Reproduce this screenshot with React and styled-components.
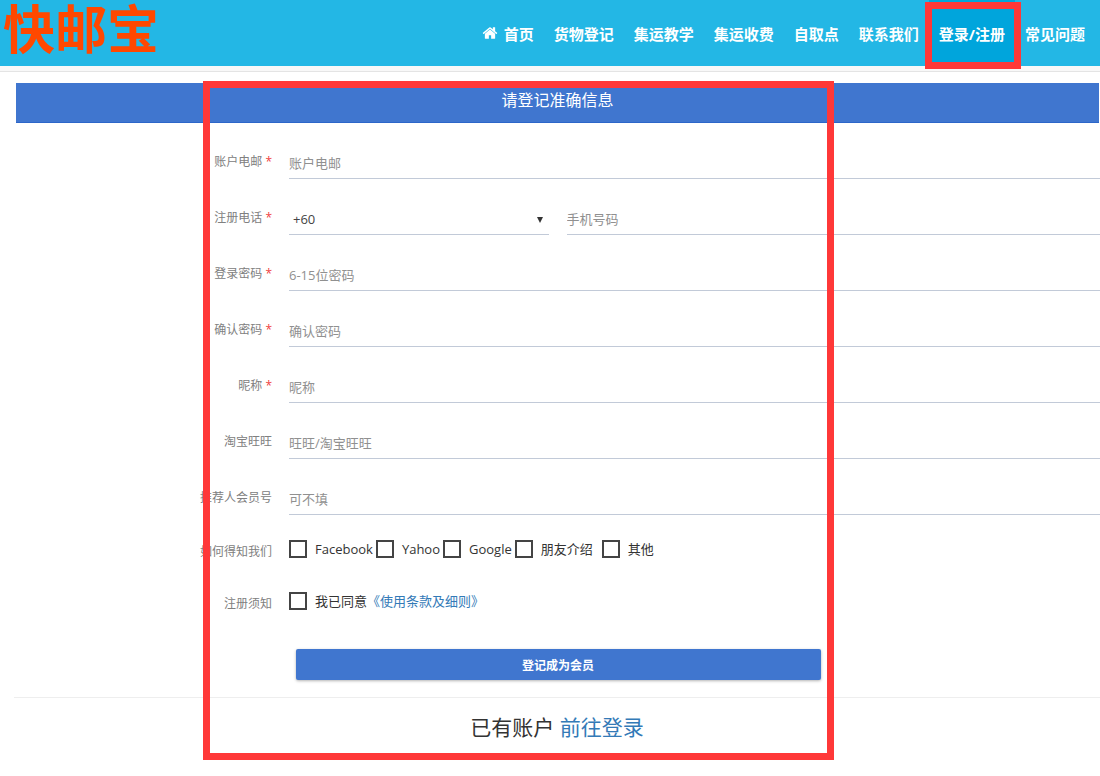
import styled, { createGlobalStyle } from 'styled-components';

const menu = [
  { label: '首页', icon: true },
  { label: '货物登记' },
  { label: '集运教学' },
  { label: '集运收费' },
  { label: '自取点' },
  { label: '联系我们' },
  { label: '登录/注册', active: true },
  { label: '常见问题' },
];

const fields = [
  { id: 'password', label: '登录密码', placeholder: '6-15位密码', type: 'password', required: true },
  { id: 'confirm', label: '确认密码', placeholder: '确认密码', type: 'password', required: true },
  { id: 'nickname', label: '昵称', placeholder: '昵称', type: 'text', required: true },
  { id: 'wangwang', label: '淘宝旺旺', placeholder: '旺旺/淘宝旺旺', type: 'text' },
  { id: 'referrer', label: '推荐人会员号', placeholder: '可不填', type: 'text' },
];

const sources = [
  { id: 'facebook', label: 'Facebook' },
  { id: 'yahoo', label: 'Yahoo' },
  { id: 'google', label: 'Google' },
  { id: 'friend', label: '朋友介绍', spaced: true },
  { id: 'other', label: '其他' },
];

function Field({ id, label, placeholder, type, required }) {
  return (
    <Row>
      <Label htmlFor={id}>
        {label}
        {required && <Required> *</Required>}
      </Label>
      <Input id={id} type={type} placeholder={placeholder} />
    </Row>
  );
}

function HomeIcon() {
  return (
    <svg width="16" height="16" viewBox="0 0 1792 1792" fill="currentColor" aria-hidden="true">
      <path d="M1472 992v480q0 26-19 45t-45 19h-384v-384h-256v384h-384q-26 0-45-19t-19-45v-480q0-1 .5-3t.5-3l575-474 575 474q1 2 1 6zm223-69l-62 74q-8 9-21 11h-3q-13 0-21-7l-692-577-692 577q-12 8-24 7-13-2-21-11l-62-74q-8-10-7-23.5t11-21.5l719-599q32-26 76-26t76 26l244 204v-195q0-14 9-23t23-9h192q14 0 23 9t9 23v408l219 182q10 8 11 21.5t-7 23.5z" />
    </svg>
  );
}

export default function App() {
  return (
    <>
      <GlobalStyle />
      <Header>
        <Logo href="#">快邮宝</Logo>
        <Nav>
          {menu.map((item) => (
            <NavLink key={item.label} href="#" $active={item.active}>
              {item.icon && <HomeIcon />}
              {item.label}
            </NavLink>
          ))}
        </Nav>
      </Header>
      <Strip />

      <Main>
        <Form onSubmit={(e) => e.preventDefault()}>
          <Title>请登记准确信息</Title>

          <Field id="email" label="账户电邮" placeholder="账户电邮" type="email" required />

          <Row>
            <Label htmlFor="phone">
              注册电话<Required> *</Required>
            </Label>
            <PhoneGroup>
              <SelectWrap>
                <Select aria-label="+60" defaultValue="+60">
                  <option value="+60">+60</option>
                </Select>
                <Arrow viewBox="0 0 6 6" aria-hidden="true">
                  <path d="M0 0h6L3 6z" />
                </Arrow>
              </SelectWrap>
              <Input id="phone" type="tel" placeholder="手机号码" />
            </PhoneGroup>
          </Row>

          {fields.map((field) => (
            <Field key={field.id} {...field} />
          ))}

          <Checks>
            <CheckRow role="group" aria-labelledby="source-label">
              <CheckTitle id="source-label">如何得知我们</CheckTitle>
              <Options>
                {sources.map((source) => (
                  <Option key={source.id} $spaced={source.spaced}>
                    <Checkbox type="checkbox" name={source.id} />
                    {source.label}
                  </Option>
                ))}
              </Options>
            </CheckRow>
            <CheckRow role="group" aria-labelledby="terms-label">
              <CheckTitle id="terms-label">注册须知</CheckTitle>
              <Options>
                <Option>
                  <Checkbox type="checkbox" name="terms" />
                  <span>
                    我已同意<Link href="#">《使用条款及细则》</Link>
                  </span>
                </Option>
              </Options>
            </CheckRow>
          </Checks>

          <Submit type="submit">登记成为会员</Submit>
        </Form>

        <Footer>
          已有账户 <Link href="#">前往登录</Link>
        </Footer>
        <Frame />
      </Main>
    </>
  );
}

const GlobalStyle = createGlobalStyle`
  * {
    box-sizing: border-box;
  }

  body {
    margin: 0;
    background: #fff;
    color: #333;
    font-family: 'Open Sans', 'Noto Sans CJK SC', sans-serif;
    font-size: 13px;
  }

  input, select, button {
    font-family: inherit;
  }
`;

const Header = styled.header`
  display: flex;
  justify-content: space-between;
  height: 66px;
  background: #23b7e5;
`;

const Logo = styled.a`
  padding-left: 3px;
  color: #ff4800;
  font-size: 52px;
  font-weight: 700;
  line-height: 58px;
  text-decoration: none;
  white-space: nowrap;
`;

const Nav = styled.nav`
  display: flex;
  padding-right: 5px;
`;

const NavLink = styled.a`
  position: relative;
  display: flex;
  align-items: center;
  gap: 6px;
  padding: 0 10px;
  background: ${({ $active }) => ($active ? '#00a5dc' : 'transparent')};
  color: #fff;
  font-size: 15px;
  font-weight: 700;
  text-decoration: none;
  white-space: nowrap;

  ${({ $active }) => $active && `
    &::after {
      content: '';
      position: absolute;
      inset: 2px -6px -3px -4px;
      border: 7px solid #ff3838;
      z-index: 1;
    }
  `}
`;

const Strip = styled.div`
  height: 6px;
  border-bottom: 1px solid #e4e4e4;
  background: #f8f8f8;
`;

const Main = styled.main`
  position: relative;
  padding: 11px 0 24px;
`;

const Form = styled.form`
  padding-left: 16px;
`;

const Title = styled.h1`
  margin: 0 1px 0 0;
  padding: 8px 0 12px;
  border-bottom: 1px solid #2c66c9;
  background: #4076cf;
  color: #fff;
  font-size: 16px;
  font-weight: 400;
  line-height: 19px;
  text-align: center;
`;

const Row = styled.div`
  display: grid;
  grid-template-columns: 256px 1fr;
  column-gap: 17px;
  align-items: end;
  height: 56px;
`;

const Label = styled.label`
  padding-bottom: 7px;
  color: #808080;
  font-size: 12px;
  line-height: 20px;
  text-align: right;
  white-space: nowrap;
`;

const Required = styled.span`
  color: #f04040;
`;

const Input = styled.input`
  width: 100%;
  min-width: 0;
  height: 32px;
  padding: 0;
  border: 0;
  border-bottom: 1px solid #c2cad8;
  border-radius: 0;
  outline: 0;
  background: transparent;
  color: #444;
  font-size: 13px;

  &::placeholder {
    color: #909090;
    opacity: 1;
  }
`;

const PhoneGroup = styled.div`
  display: grid;
  grid-template-columns: 32% 1fr;
  column-gap: 18px;
`;

const SelectWrap = styled.div`
  position: relative;
`;

const Select = styled.select`
  display: block;
  width: 100%;
  height: 32px;
  padding: 0 4px;
  border: 0;
  border-bottom: 1px solid #c2cad8;
  border-radius: 0;
  appearance: none;
  background: transparent;
  color: #444;
  font-size: 13px;
`;

const Arrow = styled.svg`
  position: absolute;
  top: 14px;
  right: 6px;
  width: 6px;
  height: 6px;
  fill: #333;
  pointer-events: none;
`;

const Checks = styled.div`
  padding-top: 8px;
`;

const CheckRow = styled.div`
  display: grid;
  grid-template-columns: 256px 1fr;
  column-gap: 17px;
  align-items: center;
  height: 52px;
`;

const CheckTitle = styled.span`
  padding-top: 4px;
  color: #808080;
  font-size: 12px;
  text-align: right;
  white-space: nowrap;
`;

const Options = styled.div`
  display: flex;
  gap: 3px;
`;

const Option = styled.label`
  display: flex;
  align-items: center;
  gap: 8px;
  margin-right: ${({ $spaced }) => ($spaced ? '6px' : '0')};
  font-size: 13px;
  line-height: 18px;
  white-space: nowrap;
`;

const Checkbox = styled.input`
  width: 18px;
  height: 18px;
  margin: 0;
  border: 2px solid #444;
  appearance: none;
  background: #fff;

  &:checked {
    background: #4076cf;
  }
`;

const Link = styled.a`
  color: #337ab7;
  text-decoration: none;
`;

const Submit = styled.button`
  display: block;
  width: 525px;
  max-width: 100%;
  height: 31px;
  margin: 22px auto 0;
  border: 0;
  border-radius: 2px;
  background: #4076cf;
  box-shadow: 0 1px 3px rgba(0, 0, 0, 0.3);
  color: #fff;
  font-size: 12px;
  font-weight: 700;
`;

const Footer = styled.div`
  margin: 17px 0 0 14px;
  padding-top: 13px;
  border-top: 1px solid #eee;
  font-size: 21px;
  line-height: 32px;
  text-align: center;
`;

// Highlight around the registration form
const Frame = styled.div`
  position: absolute;
  top: 9px;
  bottom: 7px;
  left: 203px;
  width: 631px;
  border: 7px solid #ff3838;
  pointer-events: none;
`;
